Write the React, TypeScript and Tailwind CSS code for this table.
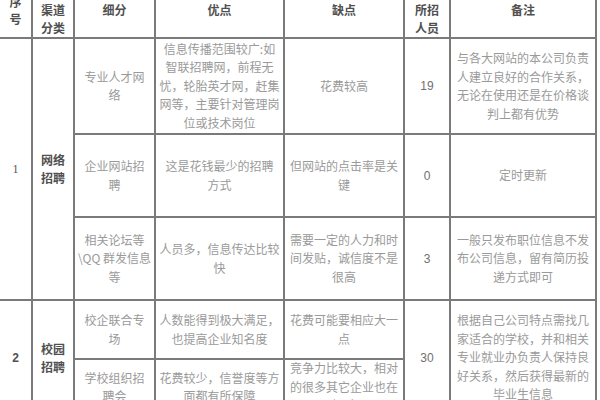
import React from "react";

const B = "border-r-2 border-b-2 border-[#7a7a7a]";
const cellBody =
  "flex items-center justify-center text-center text-[12px] leading-[18.5px] text-[#9a9a9a]";
const head =
  "flex items-start justify-center text-center text-[12px] leading-[18px] font-bold text-[#505050] pt-[1px]";
const num = "flex items-center justify-center text-[12px] text-[#707070] [font-family:'Liberation_Sans',sans-serif]";

function Lines({ l }: { l: string[] }) {
  return (
    <div>
      {l.map((t, i) => (
        <div key={i} className="whitespace-nowrap">
          {t}
        </div>
      ))}
    </div>
  );
}

export default function App() {
  return (
    <div
      className="w-[600px] h-[400px] overflow-hidden bg-white"
      style={{ fontFamily: "'Noto Sans CJK SC', 'Noto Sans', sans-serif" }}
    >
      <div className="grid grid-cols-[33px_42px_81px_129px_120px_46px_146px] grid-rows-[39px_96px_83px_83px_59px_56px]">
        {/* header */}
        <div className={`${B} col-start-1 row-start-1 flex justify-center text-center text-[12px] leading-[17px] font-bold text-[#505050]`}>
          <div className="-mt-[7px]">
            <div>序</div>
            <div>号</div>
          </div>
        </div>
        <div className={`${B} ${head} col-start-2 row-start-1`}>
          <Lines l={["渠道", "分类"]} />
        </div>
        <div className={`${B} ${head} col-start-3 row-start-1`}>细分</div>
        <div className={`${B} ${head} col-start-4 row-start-1`}>优点</div>
        <div className={`${B} ${head} col-start-5 row-start-1`}>缺点</div>
        <div className={`${B} ${head} col-start-6 row-start-1`}>
          <Lines l={["所招", "人员"]} />
        </div>
        <div className={`${B} ${head} col-start-7 row-start-1`}>备注</div>

        {/* group 1 */}
        <div className={`${B} col-start-1 row-start-2 row-span-3 flex items-center justify-center text-[12px] text-[#555] [font-family:'Liberation_Serif',serif]`}>
          1
        </div>
        <div className={`${B} col-start-2 row-start-2 row-span-3 flex items-center justify-center text-center text-[12px] leading-[18px] font-bold text-[#505050]`}>
          <Lines l={["网络", "招聘"]} />
        </div>

        {/* row 1a */}
        <div className={`${B} ${cellBody} col-start-3 row-start-2`}>
          <Lines l={["专业人才网", "络"]} />
        </div>
        <div className={`${B} ${cellBody} col-start-4 row-start-2`}>
          <Lines
            l={[
              "信息传播范围较广:如",
              "智联招聘网，前程无",
              "忧，轮胎英才网，赶集",
              "网等，主要针对管理岗",
              "位或技术岗位",
            ]}
          />
        </div>
        <div className={`${B} ${cellBody} col-start-5 row-start-2`}>花费较高</div>
        <div className={`${B} ${num} col-start-6 row-start-2`}>19</div>
        <div className={`${B} ${cellBody} col-start-7 row-start-2`}>
          <Lines
            l={[
              "与各大网站的本公司负责",
              "人建立良好的合作关系，",
              "无论在使用还是在价格谈",
              "判上都有优势",
            ]}
          />
        </div>

        {/* row 1b */}
        <div className={`${B} ${cellBody} col-start-3 row-start-3`}>
          <Lines l={["企业网站招", "聘"]} />
        </div>
        <div className={`${B} ${cellBody} col-start-4 row-start-3`}>
          <Lines l={["这是花钱最少的招聘", "方式"]} />
        </div>
        <div className={`${B} ${cellBody} col-start-5 row-start-3`}>
          <Lines l={["但网站的点击率是关", "键"]} />
        </div>
        <div className={`${B} ${num} col-start-6 row-start-3`}>0</div>
        <div className={`${B} ${cellBody} col-start-7 row-start-3`}>定时更新</div>

        {/* row 1c */}
        <div className={`${B} ${cellBody} col-start-3 row-start-4`}>
          <Lines l={["相关论坛等", "\\QQ 群发信息", "等"]} />
        </div>
        <div className={`${B} ${cellBody} col-start-4 row-start-4`}>
          <Lines l={["人员多，信息传达比较", "快"]} />
        </div>
        <div className={`${B} ${cellBody} col-start-5 row-start-4`}>
          <Lines l={["需要一定的人力和时", "间发贴，诚信度不是", "很高"]} />
        </div>
        <div className={`${B} ${num} col-start-6 row-start-4`}>3</div>
        <div className={`${B} ${cellBody} col-start-7 row-start-4`}>
          <Lines
            l={[
              "一般只发布职位信息不发",
              "布公司信息，留有简历投",
              "递方式即可",
            ]}
          />
        </div>

        {/* group 2 */}
        <div className={`${B} col-start-1 row-start-5 row-span-2 flex items-center justify-center text-[12px] font-bold text-[#505050] [font-family:'Liberation_Sans',sans-serif]`}>
          2
        </div>
        <div className={`${B} col-start-2 row-start-5 row-span-2 flex items-center justify-center text-center text-[12px] leading-[18px] font-bold text-[#505050]`}>
          <Lines l={["校园", "招聘"]} />
        </div>

        {/* row 2a */}
        <div className={`${B} ${cellBody} col-start-3 row-start-5`}>
          <Lines l={["校企联合专", "场"]} />
        </div>
        <div className={`${B} ${cellBody} col-start-4 row-start-5`}>
          <Lines l={["人数能得到极大满足，", "也提高企业知名度"]} />
        </div>
        <div className={`${B} ${cellBody} col-start-5 row-start-5`}>
          <Lines l={["花费可能要相应大一", "点"]} />
        </div>
        <div className={`${B} ${num} col-start-6 row-start-5 row-span-2`}>30</div>
        <div className={`${B} ${cellBody} col-start-7 row-start-5 row-span-2`}>
          <Lines
            l={[
              "根据自己公司特点需找几",
              "家适合的学校，并和相关",
              "专业就业办负责人保持良",
              "好关系，然后获得最新的",
              "毕业生信息",
            ]}
          />
        </div>

        {/* row 2b */}
        <div className={`${B} ${cellBody} col-start-3 row-start-6`}>
          <Lines l={["学校组织招", "聘会"]} />
        </div>
        <div className={`${B} ${cellBody} col-start-4 row-start-6`}>
          <Lines l={["花费较少，信誉度等方", "面都有所保障"]} />
        </div>
        <div className={`${B} ${cellBody} col-start-5 row-start-6`}>
          <Lines l={["竞争力比较大，相对", "的很多其它企业也在", "招聘"]} />
        </div>
      </div>
    </div>
  );
}
